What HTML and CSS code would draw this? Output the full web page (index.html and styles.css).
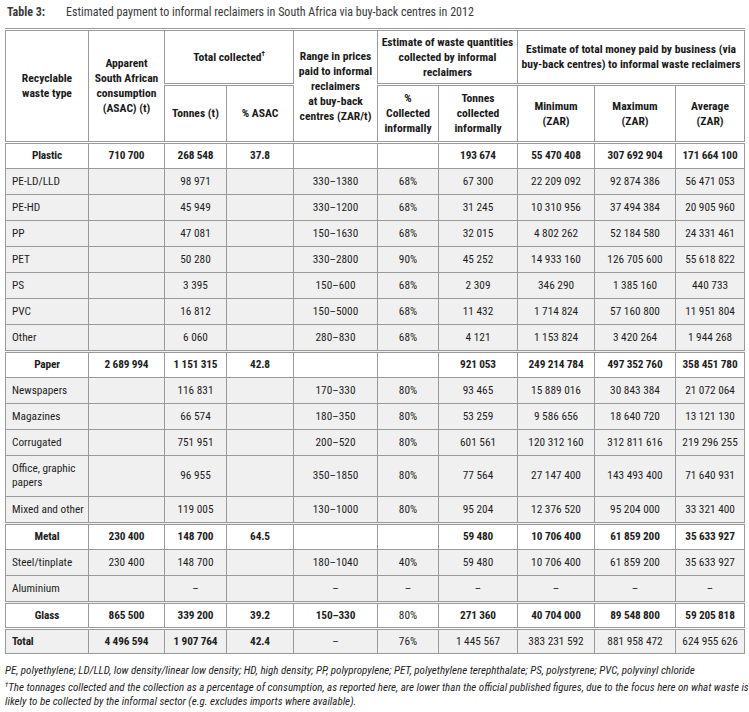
FILE: index.html
```html
<!DOCTYPE html>
<html>
<head>
<meta charset="utf-8">
<link rel="stylesheet" href="styles.css">
</head>
<body>
<div class="title"><span class="tlabel">Table 3:</span><span class="tcap">Estimated payment to informal reclaimers in South Africa via buy-back centres in 2012</span></div>
<table class="data">
<colgroup>
<col class="c1"><col class="c2"><col class="c3"><col class="c4"><col class="c5"><col class="c6"><col class="c7"><col class="c8"><col class="c9"><col class="c10">
</colgroup>
<thead>
<tr class="h1">
<th rowspan="2">Recyclable<br>waste type</th>
<th rowspan="2">Apparent<br>South African<br>consumption<br>(ASAC) (t)</th>
<th colspan="2">Total collected<sup>†</sup></th>
<th rowspan="2">Range in prices<br>paid to informal<br>reclaimers<br>at buy-back<br>centres (ZAR/t)</th>
<th colspan="2">Estimate of waste quantities<br>collected by informal<br>reclaimers</th>
<th colspan="3">Estimate of total money paid by business (via<br>buy-back centres) to informal waste reclaimers</th>
</tr>
<tr class="h2">
<th>Tonnes (t)</th>
<th>% ASAC</th>
<th>%<br>Collected<br>informally</th>
<th>Tonnes<br>collected<br>informally</th>
<th>Minimum<br>(ZAR)</th>
<th>Maximum<br>(ZAR)</th>
<th>Average<br>(ZAR)</th>
</tr>
</thead>
<tbody>
<tr class="grp first"><td class="gname">Plastic</td><td>710 700</td><td>268 548</td><td>37.8</td><td></td><td></td><td>193 674</td><td>55 470 408</td><td>307 692 904</td><td>171 664 100</td></tr>
<tr><td class="name">PE-LD/LLD</td><td></td><td>98 971</td><td></td><td>330–1380</td><td>68%</td><td>67 300</td><td>22 209 092</td><td>92 874 386</td><td>56 471 053</td></tr>
<tr><td class="name">PE-HD</td><td></td><td>45 949</td><td></td><td>330–1200</td><td>68%</td><td>31 245</td><td>10 310 956</td><td>37 494 384</td><td>20 905 960</td></tr>
<tr><td class="name">PP</td><td></td><td>47 081</td><td></td><td>150–1630</td><td>68%</td><td>32 015</td><td>4 802 262</td><td>52 184 580</td><td>24 331 461</td></tr>
<tr><td class="name">PET</td><td></td><td>50 280</td><td></td><td>330–2800</td><td>90%</td><td>45 252</td><td>14 933 160</td><td>126 705 600</td><td>55 618 822</td></tr>
<tr><td class="name">PS</td><td></td><td>3 395</td><td></td><td>150–600</td><td>68%</td><td>2 309</td><td>346 290</td><td>1 385 160</td><td>440 733</td></tr>
<tr><td class="name">PVC</td><td></td><td>16 812</td><td></td><td>150–5000</td><td>68%</td><td>11 432</td><td>1 714 824</td><td>57 160 800</td><td>11 951 804</td></tr>
<tr><td class="name">Other</td><td></td><td>6 060</td><td></td><td>280–830</td><td>68%</td><td>4 121</td><td>1 153 824</td><td>3 420 264</td><td>1 944 268</td></tr>
<tr class="grp"><td class="gname">Paper</td><td>2 689 994</td><td>1 151 315</td><td>42.8</td><td></td><td></td><td>921 053</td><td>249 214 784</td><td>497 352 760</td><td>358 451 780</td></tr>
<tr><td class="name">Newspapers</td><td></td><td>116 831</td><td></td><td>170–330</td><td>80%</td><td>93 465</td><td>15 889 016</td><td>30 843 384</td><td>21 072 064</td></tr>
<tr><td class="name">Magazines</td><td></td><td>66 574</td><td></td><td>180–350</td><td>80%</td><td>53 259</td><td>9 586 656</td><td>18 640 720</td><td>13 121 130</td></tr>
<tr><td class="name">Corrugated</td><td></td><td>751 951</td><td></td><td>200–520</td><td>80%</td><td>601 561</td><td>120 312 160</td><td>312 811 616</td><td>219 296 255</td></tr>
<tr class="tall"><td class="name">Office, graphic<br>papers</td><td></td><td>96 955</td><td></td><td>350–1850</td><td>80%</td><td>77 564</td><td>27 147 400</td><td>143 493 400</td><td>71 640 931</td></tr>
<tr><td class="name">Mixed and other</td><td></td><td>119 005</td><td></td><td>130–1000</td><td>80%</td><td>95 204</td><td>12 376 520</td><td>95 204 000</td><td>33 321 400</td></tr>
<tr class="grp"><td class="gname">Metal</td><td>230 400</td><td>148 700</td><td>64.5</td><td></td><td></td><td>59 480</td><td>10 706 400</td><td>61 859 200</td><td>35 633 927</td></tr>
<tr><td class="name">Steel/tinplate</td><td>230 400</td><td>148 700</td><td></td><td>180–1040</td><td>40%</td><td>59 480</td><td>10 706 400</td><td>61 859 200</td><td>35 633 927</td></tr>
<tr><td class="name">Aluminium</td><td></td><td>–</td><td></td><td>–</td><td>–</td><td>–</td><td>–</td><td>–</td><td>–</td></tr>
<tr class="grp short"><td class="gname">Glass</td><td>865 500</td><td>339 200</td><td>39.2</td><td>150–330</td><td class="reg">80%</td><td>271 360</td><td>40 704 000</td><td>89 548 800</td><td>59 205 818</td></tr>
<tr class="total"><td class="name b">Total</td><td class="b">4 496 594</td><td class="b">1 907 764</td><td class="b">42.4</td><td>–</td><td>76%</td><td>1 445 567</td><td>383 231 592</td><td>881 958 472</td><td>624 955 626</td></tr>
</tbody>
</table>
<div class="notes">
<p><i>PE</i>, polyethylene; <i>LD/LLD</i>, low density/linear low density; <i>HD</i>, high density; <i>PP</i>, polypropylene; <i>PET</i>, polyethylene terephthalate; <i>PS</i>, polystyrene; <i>PVC</i>, polyvinyl chloride</p>
<p><sup>†</sup>The tonnages collected and the collection as a percentage of consumption, as reported here, are lower than the official published figures, due to the focus here on what waste is<br>likely to be collected by the informal sector (e.g. excludes imports where available).</p>
</div>
</body>
</html>
```
FILE: styles.css
```css
html, body {
  margin: 0;
  padding: 0;
  background: #ffffff;
}
body {
  font-family: Roboto, "Liberation Sans", sans-serif;
  font-stretch: 75%;
  color: #1e1e1e;
  width: 749px;
}
.title {
  display: flex;
  align-items: center;
  height: 23px;
  padding-left: 7px;
  font-size: 12px;
  color: #3a3a3a;
}
.tlabel {
  font-weight: bold;
  width: 59px;
}
.tcap {
  font-weight: normal;
}
.data {
  margin-left: 5px;
  margin-top: 5px;
  width: 739px;
  table-layout: fixed;
  border-collapse: collapse;
  border-top: 3px double #9a9a9a;
}
.c1 { width: 83px; }
.c2 { width: 76px; }
.c3 { width: 62px; }
.c4 { width: 67px; }
.c5 { width: 84px; }
.c6 { width: 61px; }
.c7 { width: 79px; }
.c8 { width: 77px; }
.c9 { width: 81px; }
.c10 { width: 69px; }
.data th, .data td {
  border: 1px solid #9a9a9a;
  text-align: center;
  vertical-align: middle;
  padding: 0 2px;
  white-space: nowrap;
}
.data th {
  font-weight: bold;
  font-size: 11.6px;
  line-height: 15px;
  background: #ffffff;
  color: #1a1a1a;
}
.data thead tr.h1 th {
  height: 52px;
}
.data thead tr.h2 th {
  height: 55px;
}
.data thead tr.h1 th[colspan] {
  border-bottom: 3px double #9a9a9a;
}
.data thead tr.h2 th, .data thead tr.h1 th[rowspan] {
  border-bottom: 3px double #9a9a9a;
}
.data sup {
  font-size: 7px;
  vertical-align: 5px;
  line-height: 0;
}
.data td {
  height: 25px;
  line-height: 14px;
  background: #f0f0f0;
  font-size: 11.3px;
}
.data tr.grp td {
  background: #ffffff;
  font-weight: bold;
  border-top: 3px double #9a9a9a;
  height: 24px;
  letter-spacing: -0.15px;
}
.data tr.grp.short td {
  height: 23px;
}
.data tr.grp td.reg {
  font-weight: normal;
  letter-spacing: 0;
}
.data tr.total td {
  border-top: 3px double #9a9a9a;
  height: 23px;
}
.data td.b {
  font-weight: bold;
  letter-spacing: -0.15px;
}
.data td.name {
  text-align: left;
  padding-left: 6px;
}
.data tr.tall td {
  height: 40px;
}
.notes {
  margin: 10px 0 0 5px;
  font-size: 11px;
  font-style: italic;
  color: #1e1e1e;
}
.notes p {
  margin: 0 0 3px 0;
  line-height: 14px;
  white-space: nowrap;
}
.notes sup {
  font-size: 7px;
  vertical-align: 4px;
  line-height: 0;
}
```
